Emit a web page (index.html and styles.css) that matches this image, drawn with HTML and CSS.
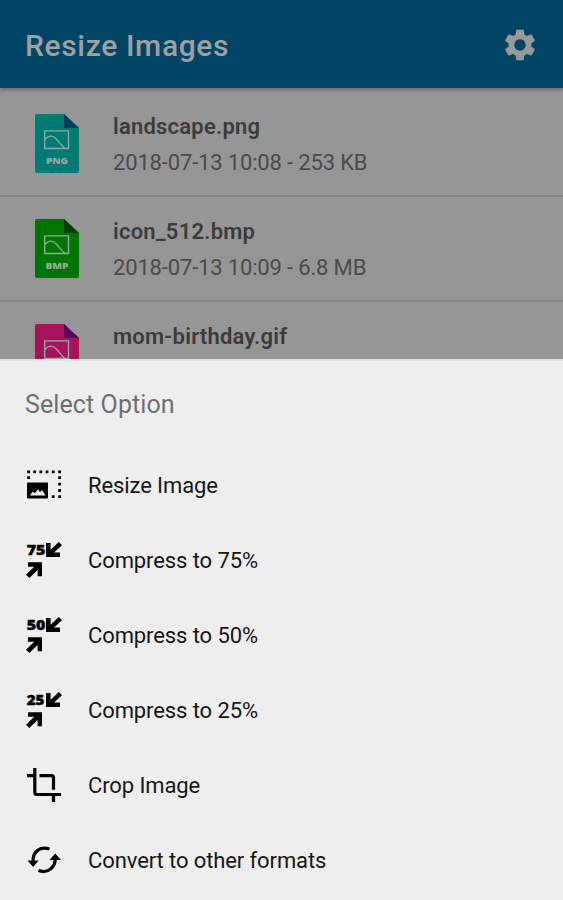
FILE: index.html
```
<!DOCTYPE html>
<html lang="en">
<head>
<meta charset="utf-8">
<title>Resize Images</title>
<link rel="stylesheet" href="styles.css">
</head>
<body>
<svg width="0" height="0" class="defs">
  <symbol id="compress" viewBox="0 0 36 36">
    <path d="M20 1v14h14v-4.600h-6L36 3.200 32.800 0l-8.200 7.700V1zM2 20.200h14v14h-4.400v-6.300L3.400 36 0 32.700l8.200-8H2z"/>
  </symbol>
  <symbol id="picture" viewBox="0 0 44 59">
    <path class="mark" d="M9.700 16.900h23.800v17.600H9.700zM9.700 25.500c5-5 8.500-4 12 0 3 3 5.500 7.500 9 9"/>
  </symbol>
</svg>
<header class="bar">
  <h1>Resize Images</h1>
  <svg class="gear" viewBox="0 0 24 24"><path d="M19.140 12.940c.04-.3.060-.61.060-.94 0-.32-.02-.64-.07-.94l2.030-1.580c.18-.14.230-.41.120-.61l-1.920-3.320c-.12-.22-.37-.29-.59-.22l-2.390.96c-.5-.38-1.030-.7-1.620-.94L14.400 2.810c-.04-.24-.24-.41-.48-.41h-3.840c-.24 0-.43.170-.47.410L9.250 5.350c-.59.240-1.130.57-1.620.94L5.240 5.330c-.22-.08-.47 0-.59.22L2.740 8.870c-.12.210-.08.470.120.61l2.030 1.580c-.05.3-.09.630-.09.940s.020.640.070.94l-2.030 1.580c-.18.140-.23.410-.12.610l1.920 3.320c.120.220.370.290.590.220l2.390-.96c.5.380 1.030.7 1.620.940l.36 2.540c.050.240.240.410.480.410h3.840c.24 0 .440-.17.470-.41l.36-2.540c.590-.24 1.130-.56 1.620-.94l2.390.960c.22.080.470 0 .590-.22l1.920-3.320c.12-.22.070-.47-.12-.61zM12 15.600c-1.980 0-3.600-1.620-3.600-3.600s1.620-3.600 3.600-3.600 3.600 1.620 3.600 3.600-1.620 3.600-3.600 3.600z"/></svg>
</header>
<main class="files">
  <article class="file png">
    <svg class="doc" viewBox="0 0 44 59"><path class="page" d="M2 0h27l15 14v43q0 2-2 2H2q-2 0-2-2V2q0-2 2-2z"/><path class="fold" d="M29 0l15 14H29z"/><use href="#picture"/><text x="22" y="49.500" textLength="22" lengthAdjust="spacingAndGlyphs">PNG</text></svg>
    <div><h2>landscape.png</h2><p>2018-07-13 10:08 - 253 KB</p></div>
  </article>
  <article class="file bmp">
    <svg class="doc" viewBox="0 0 44 59"><path class="page" d="M2 0h27l15 14v43q0 2-2 2H2q-2 0-2-2V2q0-2 2-2z"/><path class="fold" d="M29 0l15 14H29z"/><use href="#picture"/><text x="22" y="49.500" textLength="23" lengthAdjust="spacingAndGlyphs">BMP</text></svg>
    <div><h2>icon_512.bmp</h2><p>2018-07-13 10:09 - 6.8 MB</p></div>
  </article>
  <article class="file gif">
    <svg class="doc" viewBox="0 0 44 59"><path class="page" d="M2 0h27l15 14v43q0 2-2 2H2q-2 0-2-2V2q0-2 2-2z"/><path class="fold" d="M29 0l15 14H29z"/><use href="#picture"/></svg>
    <div><h2>mom-birthday.gif</h2></div>
  </article>
</main>
<section class="sheet">
  <h3>Select Option</h3>
  <ul>
    <li><svg class="icon" viewBox="0 0 36 36"><path d="M2 15.500h19q1 0 1 1v14q0 1-1 1H2q-1 0-1-1v-14q0-1 1-1zM4 28.500h15.500l-3.500-5.500-2 2.200-2-3-3.200 4-2-1.700z" fill-rule="evenodd"/><path d="M1.200 3.500H4v2.800H1.200zM7.300 3.500h2.800v2.800H7.300zM13.400 3.500h2.800v2.800h-2.800zM19.600 3.500h2.800v2.800h-2.800zM25.800 3.500h2.800v2.800h-2.800zM32.200 3.500H35v2.800h-2.800zM1.200 9.300H4v2.800H1.200zM32.200 9.300H35v2.800h-2.800zM32.200 15.800H35v2.800h-2.800zM32.200 22.100H35v2.800h-2.800zM32.200 28.300H35v2.800h-2.800zM25.800 28.300h2.800v2.800h-2.800z"/></svg><span>Resize Image</span></li>
    <li><svg class="icon" viewBox="0 0 36 36"><use href="#compress"/><text x=".7" y="13" textLength="18.500" lengthAdjust="spacingAndGlyphs">75</text></svg><span>Compress to 75%</span></li>
    <li><svg class="icon" viewBox="0 0 36 36"><use href="#compress"/><text x=".7" y="13" textLength="18.500" lengthAdjust="spacingAndGlyphs">50</text></svg><span>Compress to 50%</span></li>
    <li><svg class="icon" viewBox="0 0 36 36"><use href="#compress"/><text x=".7" y="13" textLength="17.500" lengthAdjust="spacingAndGlyphs">25</text></svg><span>Compress to 25%</span></li>
    <li><svg class="icon" viewBox="0 0 36 36"><path class="line" d="M1 8.700h8.500M8.800 1v24.500q0 2 2 2H35M13.500 8.700h12q2 0 2 2v12M27.500 27v8"/></svg><span>Crop Image</span></li>
    <li><svg class="icon" viewBox="0 0 36 36"><path class="line" d="M23.500 7C13 3.500 6.500 11 7 20M12.500 28.600C22 32 29.500 25 29.300 16"/><path d="M1.500 18.500h11.200L7.100 25zM23.500 18l5.700-6.500L35 18z"/></svg><span>Convert to other formats</span></li>
  </ul>
</section>
</body>
</html>
```
FILE: styles.css
```
* { box-sizing: border-box; margin: 0; padding: 0; }
body {
  width: 563px;
  height: 900px;
  overflow: hidden;
  display: flex;
  flex-direction: column;
  background: #969696;
  font-family: Roboto, sans-serif;
}
.defs { position: absolute; }
.bar {
  flex: none;
  height: 88px;
  padding: 2px 24px 0 25px;
  display: flex;
  align-items: center;
  justify-content: space-between;
  background: #004566;
  color: #a0a0a0;
  box-shadow: 0 1px 4px rgba(0, 0, 0, .4);
  z-index: 1;
}
h1 { font-size: 30px; font-weight: 500; letter-spacing: .65px; }
.gear { width: 38px; height: 38px; margin-top: -1px; fill: #999; }
.files { height: 271px; overflow: hidden; }
.file {
  height: 105px;
  padding: 22px 35px 0;
  display: flex;
  gap: 34px;
  border-top: 2px solid #858585;
}
.file:first-child { height: 107px; padding-top: 26px; border-top: 0; }
.doc { width: 44px; height: 59px; }
.file h2 { height: 36px; font-size: 22px; line-height: 26px; font-weight: 600; letter-spacing: .22px; color: #3b3b3b; }
.file p { font-size: 22px; line-height: 26px; letter-spacing: -.16px; color: #4a4a4a; }
.doc text { font: 800 9.500px "Open Sans", sans-serif; text-anchor: middle; fill: #9ba8a2; }
.mark { fill: none; stroke: #8faaa5; stroke-width: 1.400; }
.png .page { fill: #007c75; }
.png .fold { fill: #003f61; }
.bmp .page { fill: #007500; }
.bmp .fold { fill: #004000; }
.gif .page { fill: #a8125a; }
.gif .fold { fill: #590060; }
.sheet { flex: 1; background: #eee; padding: 26px 26px 0; border-top: 2px solid #e0e0e0; }
h3 { height: 60px; margin-left: -1px; font-size: 25px; line-height: 36px; font-weight: 400; letter-spacing: .1px; color: #6e6e6e; }
ul { list-style: none; }
li { height: 75px; display: flex; align-items: center; gap: 26px; font-size: 22px; letter-spacing: -.1px; color: #161616; }
li span { padding-top: 1px; }
.icon { width: 36px; height: 36px; overflow: visible; fill: #000; }
.icon text { font: 800 13.500px/1 "Open Sans", sans-serif; stroke: #000; stroke-width: .4; }
.line { fill: none; stroke: #000; stroke-width: 3.200; }
```
